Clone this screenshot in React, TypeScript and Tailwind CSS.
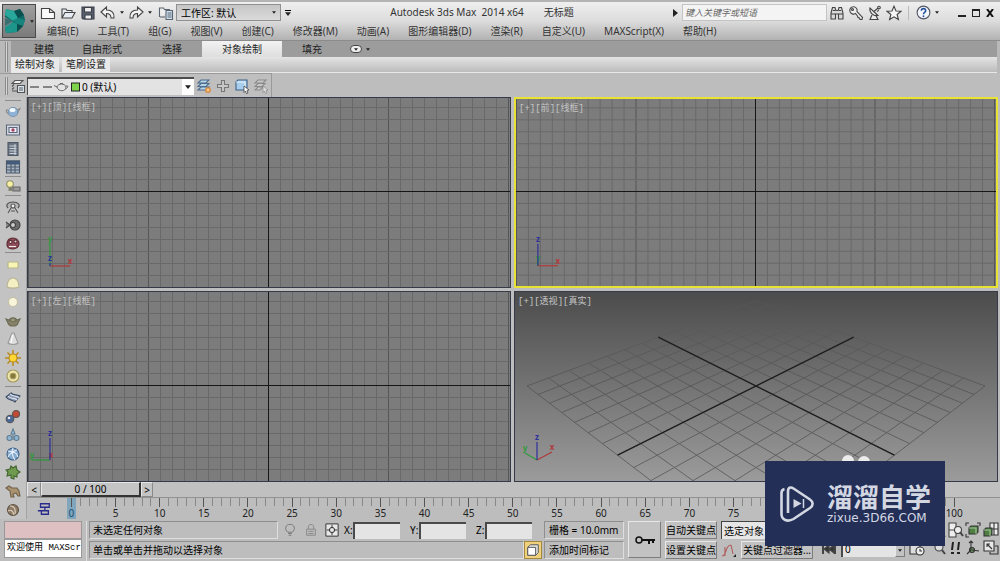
import { useState } from 'react';
import type { ReactNode } from 'react';

// ---------- Icons ----------

type IconProps = { children: ReactNode; size?: string; stroke?: string };

function Icon({ children, size = 'size-4', stroke = '#444' }: IconProps) {
  return (
    <svg viewBox="0 0 16 16" className={`${size} shrink-0`} fill="none" stroke={stroke} strokeWidth="1.1" aria-hidden="true">
      {children}
    </svg>
  );
}

function AppLogo() {
  return (
    <svg viewBox="0 0 24 26" className="h-[26px] w-6" aria-hidden="true">
      <path d="M2 1 10 3 16 1 20 7 21 12 19 18 13 24 2 25 1 20 9 14 1 9Z" fill="#0f6a66" />
      <path d="M2 1 10 3 14 10 9 13 1 7Z" fill="#2aa79b" />
      <path d="M10 3 16 1 20 7 14 10Z" fill="#0a4f50" />
      <path d="M1 10 9 13 1 18Z" fill="#3a6f70" />
      <path d="M9 13 14 10 21 12 19 18 13 16Z" fill="#17847d" />
      <path d="M9 14 13 16 13 24 2 25 1 19Z" fill="#1d958a" />
      <path d="M13 16 19 18 13 24Z" fill="#0a4f50" />
    </svg>
  );
}

const quickIcons = {
  new: <Icon><path d="M1.5 3.5h8l5 4v6h-13zM9.500 3.500v4h5" fill="#fafafa" /></Icon>,
  open: <Icon><path d="M2 13V4h4l1 1.500h5V8M2 13l3-5.500h10L12 13z" fill="#e8edf5" /></Icon>,
  save: (
    <Icon stroke="#3a3f48">
      <path d="M2 2h12v12H3l-1-1z" fill="#59616e" />
      <path d="M4.500 2.500h7V7h-7zM5 10h6.500v4H5z" fill="#eee" />
    </Icon>
  ),
  undo: <Icon><path d="M1 7l5.500-5v3C12 5 14.500 8 14 13h-3c0-3-1.500-4.500-4.500-4.500V12z" fill="#f4f4f4" /></Icon>,
  redo: <Icon><path d="M15 7L9.500 2v3C4 5 1.500 8 2 13h3c0-3 1.500-4.500 4.500-4.500V12z" fill="#f4f4f4" /></Icon>,
  workspace: (
    <Icon stroke="#5b6570">
      <path d="M1.500 12V3h4l1 1.500h5V6" fill="#eee" />
      <path d="M2 12h5" />
      <path d="M8 5.500h6.500v9H8z" fill="#cfe0f1" />
      <path d="M9.500 8h4M9.500 10h4M9.500 12h4" />
    </Icon>
  ),
};

const layerIcons = {
  manager: (
    <Icon stroke="#555">
      <path d="M5 2.500h8l-3 3H2zM2 8.500l2-2M2 11.500l2-2M2 13h5" fill="#f2f2f2" />
      <path d="M7.500 7.500h7v7h-7z" fill="#dce6f2" />
      <path d="M9 10h4M9 12h4" />
    </Icon>
  ),
  create: (
    <Icon stroke="#4c6d8b">
      <path d="M5 2h8l-3 3H2zM5 5.500h8l-3 3H2zM5 9h8l-3 3H2z" fill="#b6d3ea" />
      <circle cx="12" cy="12" r="2.300" stroke="#d9822b" fill="#f3c28a" />
    </Icon>
  ),
  add: <Icon stroke="#777"><path d="M6.500 2.500h3v4h4v3h-4v4h-3v-4h-4v-3h4z" fill="#c9c9c9" /></Icon>,
  select: (
    <Icon stroke="#3d6288">
      <path d="M2 4l2-2h9v8l-2 2H2z" fill="#a9cdec" />
      <path d="M2 4h9v8" stroke="#e9f3fb" />
      <path d="M10 8l5 4-2 .5 1 2.500-1.500.5-1-2.500-1.500 1.500z" fill="#fff" stroke="#333" strokeWidth=".7" />
    </Icon>
  ),
  current: (
    <Icon stroke="#8b8b8b">
      <path d="M5 2h8l-3 3H2zM5 5.500h7l-3 3H2zM5 9h5l-3 3H2z" fill="#c8c8c8" />
      <path d="M10 8l5 4-2 .5 1 2.500-1.500.5-1-2.500-1.500 1.500z" fill="#ddd" strokeWidth=".7" />
    </Icon>
  ),
};

const searchIcons = [
  {
    label: '搜索',
    icon: (
      <Icon>
        <path d="M2 8l1.500-5.500h2.500l.8 3h2.400l.8-3h2.500L14 8v6H9.500V9h-3v5H2z" fill="#d9d9d9" />
        <path d="M2 9h4.500M9.500 9H14M3.800 5.500h2.200M10 5.500h2.200" />
      </Icon>
    ),
  },
  {
    label: '许可证',
    icon: <Icon><path d="M7.500 8.500a3.700 3.700 0 1 1 1.500-2l5.500 6-.5 2-2 0-.5-1.500-1.500-.5-.5-1.500z" fill="#eee" /><circle cx="4.500" cy="4.500" r="1" /></Icon>,
  },
  {
    label: '通讯中心',
    icon: <Icon><path d="M3 3c-1 4 3 8.500 8 7.500zM7 6.500L11 3M5 10l-2 4.500h8L9 11" fill="#eee" /><circle cx="12" cy="2.500" r="1.300" /><path d="M10 6.500c1-.3 1.500-1 1.700-1.800" /></Icon>,
  },
  {
    label: '收藏夹',
    icon: <Icon><path d="M8 1.200l2 4.800 5 .3-3.900 3.200 1.300 5L8 11.800l-4.400 2.700 1.300-5L1 6.300 6 6z" fill="#f6f6f6" /></Icon>,
  },
];

// Left toolbar, split into groups by separators
const toolGroups: { label: string; icon: ReactNode }[][] = [
  [
    {
      label: '茶壶渲染',
      icon: (
        <Icon>
          <path d="M3 6c-2-1-3 2 1 4M12 6l3-1.500L12.500 9" stroke="#8a8a8a" />
          <ellipse cx="8" cy="8" rx="4.800" ry="4.500" fill="#8fb4d8" stroke="#7b93ab" />
          <ellipse cx="7.500" cy="6" rx="3" ry="2" fill="#f4f9fd" stroke="none" />
        </Icon>
      ),
    },
    {
      label: '渲染帧窗口',
      icon: <Icon stroke="#5d6678"><path d="M1.500 3h13v10h-13z" fill="#d4d9e3" /><path d="M4 5.500h8v5H4z" fill="#eef" /><circle cx="8" cy="8" r="1.700" fill="#a34a62" stroke="none" /></Icon>,
    },
    {
      label: '渲染设置',
      icon: <Icon stroke="#4f5a68"><path d="M3 1.500h10v13H3z" fill="#69727f" /><path d="M4.500 5h7M4.500 7.500h7M4.500 10h7M4.500 12.500h7M10 3v11" stroke="#c8d0da" /></Icon>,
    },
    {
      label: '材质表',
      icon: <Icon stroke="#4c5a6c"><path d="M1.500 2h13v12h-13z" fill="#a5b3c3" /><path d="M1.500 2h13v3h-13z" fill="#3f5d82" /><path d="M2 8h12M2 11h12M6 5v9M10 5v9" /></Icon>,
    },
  ],
  [
    {
      label: '灯光',
      icon: <Icon stroke="#8c8c70"><circle cx="5" cy="5" r="3.300" fill="#f7f0a0" /><path d="M4 8.500h3v3H4z" fill="#777" /><path d="M8 8h7v4H8z" fill="#999" stroke="#666" /></Icon>,
    },
  ],
  [
    {
      label: '阵列',
      icon: <Icon stroke="#555"><path d="M3 9c-3-3 0-6 5-6s8 3 5 6" fill="#b5b5b5" /><circle cx="8" cy="7" r="2" fill="#eee" /><path d="M6 9l-3 5M10 9l3 5M6 12h4" /></Icon>,
    },
    {
      label: '运动',
      icon: <Icon stroke="#444"><circle cx="10" cy="8" r="5" fill="#6c6c6c" /><circle cx="8" cy="8" r="2.500" fill="#ccc" /><path d="M1 5l4 3-4 3" fill="#888" /></Icon>,
    },
    {
      label: '群集',
      icon: <Icon stroke="#5c2c35"><path d="M2 10c0-5 2-7 6-7s6 3 6 6-3 5-6 5-6-1-6-4z" fill="#8e4b58" /><circle cx="5.500" cy="7" r="1.600" fill="#e6d9dc" /><circle cx="10.500" cy="6.500" r="1.600" fill="#e6d9dc" /><path d="M4 11.500h7" stroke="#eee" /></Icon>,
    },
  ],
  [
    { label: '平面', icon: <Icon stroke="#b9b48a"><path d="M3 5h10v6H3z" fill="#f8f4b4" /></Icon> },
    { label: '穹顶', icon: <Icon stroke="#b8b394"><path d="M2 12c0-6 3-9 6-9s6 3 6 9c-3 1.500-9 1.500-12 0z" fill="#f5efc4" /></Icon> },
    { label: '球体', icon: <Icon stroke="#c3bfa2"><circle cx="8" cy="8" r="4.500" fill="#f8f5da" /></Icon> },
    { label: '茶壶', icon: <Icon stroke="#6e6b55"><path d="M1 6l3 1c2-3 6-3 8 0l3-1-2 4c-1 4-9 4-10 0z" fill="#858169" /><ellipse cx="8" cy="7" rx="3" ry="1.300" fill="#b3af93" /></Icon> },
    { label: '圆锥体', icon: <Icon stroke="#999"><path d="M7 2h2l4 10c-2 2-8 2-10 0z" fill="#dedede" /><path d="M7.500 4l-1.500 8" stroke="#fff" /></Icon> },
    {
      label: '太阳',
      icon: <Icon stroke="#b98a1c"><path d="M8 0v16M0 8h16M2.500 2.500l11 11M13.500 2.500l-11 11" strokeWidth="1.500" /><circle cx="8" cy="8" r="4" fill="#ffd633" /></Icon>,
    },
    {
      label: '光度学',
      icon: <Icon stroke="#a59a5c"><circle cx="8" cy="8" r="6" fill="#efe6ad" /><circle cx="8" cy="8" r="2.800" fill="#85793c" /></Icon>,
    },
  ],
  [
    {
      label: '曲面',
      icon: <Icon stroke="#3b4a63"><path d="M1 7l5-4c3 3 5 1 9 3l-5 6c-3-3-6-1-9-5z" fill="#8a99b1" /><path d="M3 6c3 4 6 1 9 4M5 4c3 3 6 1 9 4" stroke="#dbe2ee" /></Icon>,
    },
    {
      label: '刚体',
      icon: <Icon stroke="#555"><circle cx="11" cy="5" r="3.500" fill="#c24a35" /><circle cx="5" cy="10" r="3.800" fill="#4b6796" /><circle cx="4" cy="9" r="1.300" fill="#dfe7f5" stroke="none" /></Icon>,
    },
    {
      label: '流体',
      icon: <Icon stroke="#5e7c93"><path d="M8 2l2 5H6z" fill="#a4c6dd" /><circle cx="4.500" cy="11" r="2.500" fill="#8fb5d0" /><circle cx="11.500" cy="11" r="2.500" fill="#8fb5d0" /><path d="M8 7v6" /></Icon>,
    },
    {
      label: '布料',
      icon: <Icon stroke="#3f6186"><circle cx="8" cy="8" r="6" fill="#86aacd" /><path d="M3 5c4 1 8 0 10 6M3 11c2-4 6-6 9-7M8 2c-2 5 0 9 2 12" stroke="#e5f0fa" /></Icon>,
    },
    {
      label: '植物',
      icon: <Icon stroke="#42642e"><path d="M6 14v-3L2 12l1-4-2-2 4-1 1-3 2 2 3-2 1 4 3 2-3 2 0 3-3-1v3z" fill="#6f9a4f" /></Icon>,
    },
    {
      label: '动物',
      icon: <Icon stroke="#71604a"><path d="M1 5l3-2 3 2h5l2 3 1 5h-2l-2-3-3 1 1 3H6L5 8z" fill="#a8926f" /></Icon>,
    },
    {
      label: '毛发',
      icon: <Icon stroke="#5e5142"><circle cx="8" cy="8" r="5.500" fill="#8c7b66" /><path d="M5 4c4 0 6 3 5 8M3 9c3-2 5 0 6 4" stroke="#ddd0bd" /></Icon>,
    },
  ],
];

// ---------- Header ----------

const menus = [
  '编辑(E)', '工具(T)', '组(G)', '视图(V)', '创建(C)', '修改器(M)', '动画(A)',
  '图形编辑器(D)', '渲染(R)', '自定义(U)', 'MAXScript(X)', '帮助(H)',
];

function Caret({ small = false }: { small?: boolean }) {
  return (
    <svg viewBox="0 0 8 5" className={small ? 'h-[3px] w-1 shrink-0' : 'h-1 w-1.5 shrink-0'} aria-hidden="true">
      <path d="M0 0h8L4 5z" fill="#222" />
    </svg>
  );
}

function Header() {
  return (
    <header className="flex h-10 border-t-2 border-[#b4b4b4] bg-linear-to-b from-[#efefef] via-[#dcdcdc] to-[#b2b2b2]">
      <button aria-label="应用程序" className="mt-0.5 ml-0.5 flex h-[34px] w-[34px] shrink-0 items-center justify-center gap-0.5 border border-[#4a4a4a] bg-linear-to-b from-[#a0a0a0] to-[#7a7a7a]">
        <AppLogo />
        <Caret small />
      </button>
      <div className="flex min-w-0 flex-1 flex-col">
        <div className="flex h-[21px] items-center">
          <div className="flex shrink-0 items-center pl-1">
            <button aria-label="新建" className="w-5">{quickIcons.new}</button>
            <button aria-label="打开" className="w-5">{quickIcons.open}</button>
            <button aria-label="保存" className="w-5">{quickIcons.save}</button>
            <button aria-label="撤消" className="flex w-7 items-center gap-1">{quickIcons.undo}<Caret small /></button>
            <button aria-label="重做" className="flex w-[30px] items-center gap-1">{quickIcons.redo}<Caret small /></button>
            <span className="w-[18px]">{quickIcons.workspace}</span>
            <label className="flex h-[17px] w-[105px] items-center border border-[#909090] bg-linear-to-b from-[#c6c6c6] to-[#dadada] pr-1">
              <select aria-label="工作区" className="min-w-0 flex-1 appearance-none pl-1 text-[10px] leading-4 text-black">
                <option>工作区: 默认</option>
              </select>
              <Caret small />
            </label>
            <button aria-label="自定义快速访问工具栏" className="flex flex-col items-center gap-px pl-1">
              <span className="h-px w-1.5 bg-black" />
              <Caret />
            </button>
          </div>
          <h1 className="flex min-w-0 flex-1 justify-center gap-5 text-[10px] whitespace-nowrap text-[#333]">
            <span>Autodesk 3ds Max&nbsp; 2014 x64</span>
            <span>无标题</span>
          </h1>
          <div className="flex shrink-0 items-center">
            <svg viewBox="0 0 5 8" className="mr-1 h-2 w-[5px]" aria-hidden="true"><path d="M0 0l5 4-5 4z" fill="#222" /></svg>
            <input
              type="text"
              aria-label="搜索"
              placeholder="键入关键字或短语"
              className="mr-0.5 h-[17px] w-[145px] border border-[#c4c4c4] bg-[#f4f4f4] px-0.5 text-[9px] italic placeholder:text-[#666]"
            />
            {searchIcons.map((s) => (
              <button key={s.label} aria-label={s.label} className="w-[19px]">{s.icon}</button>
            ))}
            <span className="mx-[3px] h-3.5 w-px bg-[#bbb]" />
            <button aria-label="帮助" className="flex w-7 items-center gap-1 pl-1">
              <svg viewBox="0 0 16 16" className="size-[15px] shrink-0" aria-hidden="true">
                <circle cx="8" cy="8" r="6.800" fill="#f3f6fb" stroke="#556" strokeWidth="1.200" />
                <path d="M5.700 6.200c.1-3.200 4.800-3 4.600-.1C10.200 8 8 7.900 8 9.800" fill="none" stroke="#27509b" strokeWidth="1.700" />
                <circle cx="8" cy="12" r="1" fill="#27509b" />
              </svg>
              <Caret small />
            </button>
            <div className="flex w-[60px] items-center justify-end gap-1.5 pr-1.5">
              <button aria-label="最小化" className="flex h-2 w-2 items-end"><span className="h-0.5 w-2 bg-[#222]" /></button>
              <button aria-label="最大化" className="h-2 w-2 border border-t-2 border-[#222]" />
              <button aria-label="关闭">
                <svg viewBox="0 0 8 8" className="size-2" aria-hidden="true"><path d="M1 0l6 8M7 0L1 8" stroke="#111" strokeWidth="2" /></svg>
              </button>
            </div>
          </div>
        </div>
        <nav className="flex h-[17px] items-center gap-[19px] pl-[11px] text-[10px] whitespace-nowrap text-[#333]">
          {menus.map((m) => (
            <button key={m}>{m}</button>
          ))}
        </nav>
      </div>
    </header>
  );
}

// ---------- Ribbon ----------

function Grip() {
  return <span className="ml-[5px] h-full w-[3px] shrink-0 border-x border-[#8b8b8b] bg-[#d5d5d5]" />;
}

function Ribbon() {
  const [active, setActive] = useState('对象绘制');
  const tabs = ['自由形式', '选择', '对象绘制', '填充'];

  return (
    <section className="flex h-[33px] border-t border-[#8c8c8c] bg-[#b9b9b9] pr-[3px]">
      <div className="flex w-[11px] shrink-0 py-px"><Grip /></div>
      <div className="flex min-w-0 flex-1 flex-col">
        <div className="flex h-4 items-stretch bg-[#9c9c9c] pl-[15px] text-[10px] text-[#222]">
          <button className="px-2 leading-4" onClick={() => setActive('建模')}>建模</button>
          {tabs.map((t) => (
            <button
              key={t}
              onClick={() => setActive(t)}
              className={`px-5 leading-4 ${t === active ? 'bg-linear-to-b from-[#f2f2f2] to-[#dedede]' : ''}`}
            >
              {t}
            </button>
          ))}
          <button aria-label="最小化功能区" className="ml-2 flex items-center gap-1">
            <span className="flex h-2 w-3 items-center justify-center rounded-sm border border-[#444] bg-[#eee]"><Caret small /></span>
            <Caret small />
          </button>
        </div>
        <div className="flex h-4 gap-[3px] border-b border-[#e8e8e8] bg-linear-to-b from-[#e4e4e4] to-[#bcbcbc] text-[10px] text-[#222]">
          <button className="bg-[#e9e9e9] px-1 leading-[15px]">绘制对象</button>
          <button className="bg-[#e9e9e9] px-1 leading-[15px]">笔刷设置</button>
        </div>
      </div>
    </section>
  );
}

function LayerBar() {
  return (
    <section className="flex h-6 w-[272px] items-center border-t border-r border-[#9a9a9a] bg-[#bfbfbf]">
      <div className="flex h-[18px] w-2.5 shrink-0"><Grip /></div>
      <button aria-label="层管理器" className="w-[17px]">{layerIcons.manager}</button>
      <label className="flex h-[18px] w-[167px] items-center border-t-2 border-l border-[#4d4d4d] bg-[#e3e3e3] pl-0.5">
        <svg viewBox="0 0 52 14" className="h-3.5 w-[52px] shrink-0" fill="none" stroke="#666" aria-hidden="true">
          <path d="M0 7h9M13 7h9" strokeWidth="1.500" />
          <path d="M27 7c1-4 8-4 9 0 0 5-8 5-9 0zM27 7l-3-1.500M36 6c3-1 2 2-.5 3M30 3.500h3" />
          <rect x="41.500" y="3" width="8" height="8" fill="#7fd24c" stroke="#222" />
        </svg>
        <select aria-label="层" className="min-w-0 flex-1 appearance-none text-[10px] leading-4 text-black">
          <option>0 (默认)</option>
        </select>
        <span className="flex h-full w-3 items-center justify-center bg-white"><Caret /></span>
      </label>
      <div className="flex items-center gap-[3px] pl-0.5">
        <button aria-label="新建层">{layerIcons.create}</button>
        <button aria-label="添加到层">{layerIcons.add}</button>
        <button aria-label="选择层中对象">{layerIcons.select}</button>
        <button aria-label="设为当前层">{layerIcons.current}</button>
      </div>
    </section>
  );
}

function ToolColumn() {
  return (
    <aside className="flex w-[27px] shrink-0 flex-col border-r border-[#a2a2a2] bg-[#c3c3c3] pt-[3px]">
      {toolGroups.map((group, i) => (
        <div key={i} className="flex flex-col items-center" style={{ flex: group.length }}>
          <span className="mb-0.5 h-px w-4 shrink-0 bg-[#8d8d8d]" />
          {group.map((tool) => (
            <button key={tool.label} aria-label={tool.label} className="flex min-h-0 flex-1 items-center">
              {tool.icon}
            </button>
          ))}
        </div>
      ))}
    </aside>
  );
}

// ---------- Viewports ----------

const W = 482;
const H = 189;
const CX = 241;
const CY = 94;
const STEP = 12;

type Axis = { name: string; color: string; dx: number; dy: number };

const X: Axis = { name: 'x', color: '#b03a3a', dx: 20, dy: 0 };
const Y: Axis = { name: 'y', color: '#2f9a3c', dx: 0, dy: -22 };
const Z: Axis = { name: 'z', color: '#2c2f9c', dx: 0, dy: -22 };

function Tripod({ axes }: { axes: Axis[] }) {
  return (
    <g transform="translate(22 168)">
      {axes.map((a) => (
        <g key={a.name}>
          <line x1="0" y1="0" x2={a.dx} y2={a.dy} stroke={a.color} strokeWidth="1.200" />
          <text x={a.dx} y={a.dy - 2} fill={a.color} fontSize="8" fontWeight="bold" textAnchor="middle">{a.name}</text>
        </g>
      ))}
    </g>
  );
}

function OrthoGrid({ axes }: { axes: Axis[] }) {
  const cols = Array.from({ length: 41 }, (_, i) => i - 20);
  const rows = Array.from({ length: 17 }, (_, i) => i - 8);
  const tone = (i: number) => (i === 0 ? '#161616' : i % 10 === 0 ? '#555' : '#696969');
  return (
    <svg viewBox={`0 0 ${W} ${H}`} preserveAspectRatio="xMidYMid slice" className="h-full w-full bg-[#7c7c7c]" aria-hidden="true">
      {cols.map((i) => (
        <path key={`c${i}`} d={`M${CX + i * STEP - 0.5} 0V${H}`} stroke={tone(i)} />
      ))}
      {rows.map((i) => (
        <path key={`r${i}`} d={`M0 ${CY + i * STEP - 0.5}H${W}`} stroke={tone(i)} />
      ))}
      <path d={`M${CX - 0.5} 0V${H}`} stroke="#161616" />
      <Tripod axes={axes} />
    </svg>
  );
}

// Projects a ground point (a, b in -1..1) to the perspective view
function project(a: number, b: number) {
  const side = (a - b) / 2;
  const depth = 1 + (0.345 * (a + b)) / 2;
  return `${(CX + (229 * side) / depth).toFixed(1)} ${(CY + 332 * (1 / depth - 1)).toFixed(1)}`;
}

function PerspectiveGrid() {
  const lines = Array.from({ length: 15 }, (_, i) => (i - 7) / 7);
  return (
    <svg viewBox={`0 0 ${W} ${H}`} preserveAspectRatio="xMidYMid slice" className="h-full w-full" aria-hidden="true">
      <defs>
        <linearGradient id="sky" x1="0" y1="0" x2="0" y2="1">
          <stop offset="0" stopColor="#4c4c4c" />
          <stop offset="1" stopColor="#9b9b9b" />
        </linearGradient>
        <linearGradient id="fog" gradientUnits="userSpaceOnUse" x1="0" y1="0" x2="0" y2={H}>
          <stop offset="0" stopColor="#525252" />
          <stop offset=".2" stopColor="#5a5a5a" />
          <stop offset=".5" stopColor="#5a5a5a" />
          <stop offset="1" stopColor="#646464" />
        </linearGradient>
      </defs>
      <rect width={W} height={H} fill="url(#sky)" />
      {lines.map((t) => (
        <path key={t} d={`M${project(t, -1)}L${project(t, 1)}M${project(-1, t)}L${project(1, t)}`} stroke="url(#fog)" />
      ))}
      <path d={`M${project(0, -1)}L${project(0, 1)}M${project(-1, 0)}L${project(1, 0)}`} stroke="#1e1e1e" strokeWidth="1.300" />
      <Tripod axes={[{ ...X, dx: 15, dy: -8 }, { ...Y, dx: -12, dy: -7 }, { ...Z, dy: -18 }]} />
    </svg>
  );
}

function Viewport({ name, mode, active = false, children }: { name: string; mode: string; active?: boolean; children: ReactNode }) {
  return (
    <section className={`relative min-h-0 min-w-0 overflow-hidden ${active ? 'border-2 border-[#e8e234]' : 'border border-[#363a48]'}`}>
      <div className="absolute inset-0">{children}</div>
      <p className="relative px-[3px] pt-1 font-['Liberation_Mono','Noto_Sans_CJK_SC',monospace] text-[9px] leading-3 text-[#c4c4c4]">
        [+][{name}][{mode}]
      </p>
    </section>
  );
}

function Viewports() {
  return (
    <main className="grid min-h-[385px] flex-1 grid-cols-2 grid-rows-2 gap-[3px] pr-0.5">
      <Viewport name="顶" mode="线框"><OrthoGrid axes={[X, Y, { ...Z, dy: -3 }]} /></Viewport>
      <Viewport name="前" mode="线框" active><OrthoGrid axes={[X, { ...Y, dy: -3 }, Z]} /></Viewport>
      <Viewport name="左" mode="线框"><OrthoGrid axes={[{ ...X, dx: 1 }, { ...Y, dx: -18, dy: 0 }, Z]} /></Viewport>
      <Viewport name="透视" mode="真实"><PerspectiveGrid /></Viewport>
    </main>
  );
}

// ---------- Timeline ----------

function TimeSlider() {
  const raised = 'border border-[#8a8a8a] border-t-[#e6e6e6] border-l-[#e6e6e6] bg-[#c4c4c4]';
  return (
    <div className="flex h-[15px] text-[10px] leading-3 text-black">
      <button aria-label="上一帧" className={`w-3.5 ${raised}`}>&lt;</button>
      <button className="w-[100px] border border-t-[#e6e6e6] border-r-2 border-b-2 border-l-[#e6e6e6] border-[#333] bg-[#c4c4c4] leading-3">0 / 100</button>
      <button aria-label="下一帧" className={`w-3 ${raised}`}>&gt;</button>
      <div className="flex-1 bg-[#c0c0c0]" />
    </div>
  );
}

function TrackBar() {
  const frames = Array.from({ length: 101 }, (_, i) => i);
  const hasLabel = (f: number) => f % 5 === 0 && (f < 80 || f === 100);
  return (
    <div className="flex h-[22px] border-t border-[#929292] pr-[42px]">
      <button aria-label="打开迷你曲线编辑器" className="flex w-10 shrink-0 items-center justify-center pr-1.5">
        <Icon size="size-3.5" stroke="#2b2b8c">
          <path d="M4 2h10v4H4zM9 6v4H1M5 10h8v4H5z" strokeWidth="1.500" />
        </Icon>
      </button>
      {frames.map((f) => (
        <div key={f} className={`flex w-0 flex-1 flex-col items-center text-[10px] leading-3 whitespace-nowrap ${f === 0 ? 'bg-[#7fa6bd] text-[#1d4f74]' : 'text-[#222]'}`}>
          <span className={`w-px shrink-0 ${f % 5 === 0 ? 'h-[9px] bg-[#555]' : 'h-2 bg-[#888]'}`} />
          {hasLabel(f) && <span>{f}</span>}
        </div>
      ))}
    </div>
  );
}

// ---------- Status bar ----------

const sunken = 'border border-[#8e8e8e] border-r-[#dedede] border-b-[#dedede]';
const raisedBtn = 'border border-[#7d7d7d] border-t-[#e8e8e8] border-l-[#e8e8e8] bg-[#c2c2c2]';

function Coord({ label }: { label: string }) {
  return (
    <label className="flex items-center">
      <span className="w-[9px]">{label}:</span>
      <input type="text" className="h-[17px] w-[47px] border-t-2 border-l-2 border-[#4a4a4a] bg-[#e4e4e4]" />
    </label>
  );
}

function StatusBar() {
  return (
    <footer className="flex h-[42px] gap-1 bg-[#bdbdbd] pt-0.5 pl-1 text-[10px] text-black">
      <div className="flex w-[78px] shrink-0 flex-col">
        <div className="h-[18px] border border-[#999] bg-[#dfc0c2]" />
        <div className="h-[19px] border border-[#999] bg-white px-0.5 font-['Liberation_Mono','Noto_Sans_CJK_SC',monospace] text-[9px] leading-[17px] whitespace-nowrap">
          欢迎使用 MAXScr
        </div>
      </div>

      <div className="flex min-w-0 flex-1 flex-col gap-0.5 border-l border-[#ddd] pl-0.5">
        <div className="flex h-[18px] items-center">
          <div className={`h-full min-w-0 flex-1 px-[3px] leading-4 ${sunken}`}>未选定任何对象</div>
          <div className="flex items-center gap-[7px] px-[5px]">
            <Icon size="size-3.5" stroke="#777"><path d="M5.500 10.500C1 7 3 1.500 8 1.500s7 5.500 2.500 9zM6 12h4M6.500 14h3" /></Icon>
            <Icon size="size-3.5" stroke="#888"><path d="M3 7h10v7H3zM5 7V4c0-3 6-3 6 0v3M5 9.500h6M5 12h6" /></Icon>
            <Icon size="size-3.5" stroke="#333"><path d="M1 1h14v14H1z" fill="#e8e8e8" /><circle cx="8" cy="8" r="3" /><path d="M8 2v4M8 10v4M2 8h4M10 8h4" /></Icon>
          </div>
          <div className="flex gap-2.5 pr-3">
            <Coord label="X" />
            <Coord label="Y" />
            <Coord label="Z" />
          </div>
          <div className={`h-full w-20 px-1 leading-4 ${sunken}`}>栅格 = 10.0mm</div>
        </div>
        <div className="flex h-[18px] items-center">
          <div className={`h-full min-w-0 flex-1 px-[3px] leading-4 ${sunken}`}>单击或单击并拖动以选择对象</div>
          <button aria-label="自适应降级" className="mr-0.5 flex h-full w-[18px] items-center justify-center border border-[#a58a3d] bg-[#efd07c]">
            <Icon size="size-3.5" stroke="#555"><path d="M2 5l3-3h9v9l-3 3H2z" fill="#e3e3e3" /><path d="M2 5h9v9H2z" fill="#fff" /></Icon>
          </button>
          <button className={`h-full w-20 px-1 text-left leading-4 ${sunken}`}>添加时间标记</button>
        </div>
      </div>

      <button aria-label="设置关键点" className={`flex h-[37px] w-[33px] shrink-0 items-center justify-center ${raisedBtn}`}>
        <svg viewBox="0 0 20 10" className="h-2.5 w-5" fill="none" stroke="#111" strokeWidth="2" aria-hidden="true">
          <circle cx="4" cy="5" r="3" strokeWidth="1.500" />
          <path d="M7 5h13M14 5v4M18 5v3" />
        </svg>
      </button>

      <div className="flex w-[52px] shrink-0 flex-col gap-0.5">
        <button className={`h-[18px] leading-4 whitespace-nowrap ${raisedBtn}`}>自动关键点</button>
        <button className={`h-[18px] leading-4 whitespace-nowrap ${raisedBtn}`}>设置关键点</button>
      </div>

      <div className="flex w-[92px] shrink-0 flex-col gap-0.5">
        <select aria-label="选择集" className="h-[18px] appearance-none border-t border-l border-[#444] bg-[#e6e6e6] px-0.5 leading-4">
          <option>选定对象</option>
        </select>
        <div className="flex items-center gap-1">
          <button aria-label="新建关键点切线">
            <Icon stroke="#b05a5a"><path d="M1 14c5 0 3-11 9-11M10 3l2 9M4 5v9" /><path d="M15 15v-3l-3 3z" fill="#222" stroke="none" /></Icon>
          </button>
          <button className={`h-[18px] flex-1 leading-4 whitespace-nowrap ${raisedBtn}`}>关键点过滤器...</button>
        </div>
      </div>

      <div className="flex w-[108px] shrink-0 items-end gap-1 pb-1 pl-1">
        <button aria-label="上一关键点">
          <Icon><path d="M2 3v10M14 3v10" strokeWidth="2" /><path d="M8 4v8L3 8zM13 4v8L8 8z" fill="#333" /></Icon>
        </button>
        <div className="flex h-[18px] items-stretch">
          <input type="text" aria-label="当前帧" defaultValue="0" className="w-[54px] border-t-2 border-l-2 border-[#4a4a4a] bg-[#e4e4e4] px-0.5" />
          <button aria-label="减少帧" className={`flex w-2.5 items-end justify-center pb-1 ${raisedBtn}`}><Caret small /></button>
        </div>
        <button aria-label="时间配置">
          <Icon stroke="#333"><path d="M1 3h10v10H1z" fill="#ddd" /><circle cx="11" cy="10" r="4" fill="#eee" /><path d="M11 8v2h2" /></Icon>
        </button>
      </div>

      {/* Viewport navigation */}
      <div className="grid w-[71px] shrink-0 grid-cols-4 grid-rows-2 place-items-center pb-1">
        <Icon stroke="#444"><circle cx="7" cy="7" r="4" fill="#ddd" /><path d="M10 10l5 5" strokeWidth="2" /></Icon>
        <Icon stroke="#444"><path d="M1 1h7v14H1zM1 8h7" fill="#eee" /><circle cx="10" cy="8" r="3.500" fill="#eee" /><path d="M12 10l3 4" strokeWidth="2" /></Icon>
        <Icon stroke="#333">
          <path d="M1 4V1h3M12 1h3v3M1 12v3h3" />
          <path d="M4 6l2-2h7v6l-2 2H4z" fill="#4f7f42" />
          <path d="M4 6h7v6" stroke="#a4c79a" />
        </Icon>
        <Icon stroke="#333">
          <path d="M7 1h8v12H7zM7 7h8M11 1v12" fill="#eee" />
          <path d="M1 8l2-2h6v6l-2 2H1z" fill="#4f7f42" />
          <path d="M1 8h6v6" stroke="#a4c79a" />
        </Icon>
        <Icon stroke="#444"><path d="M1 5h5v5" strokeDasharray="1.500 1.500" /><circle cx="9" cy="7" r="4" fill="#ddd" /><path d="M12 10l3 4" strokeWidth="2" /></Icon>
        <Icon stroke="#222"><path d="M5 2l-1 8M11 2l-1 8" strokeWidth="2" /><path d="M3 13h3M9 13h3" strokeWidth="2" /></Icon>
        <Icon stroke="#333"><circle cx="7" cy="10" r="2.500" fill="#6b8f5e" /><path d="M6 1v9l-4 4M7 10l7 1M4 3l2-2 2 2" /></Icon>
        <Icon stroke="#333"><path d="M1 1h10v10H1z" fill="#e8e8e8" /><path d="M12 6h3v8H7v-2M4 4l5 5M4 7V4h3" /></Icon>
      </div>
    </footer>
  );
}

function Watermark() {
  return (
    <div className="absolute right-[55px] bottom-[15px]">
      <svg viewBox="0 0 30 14" className="absolute -top-[7px] left-[76px] h-3.5 w-[30px]" aria-hidden="true">
        <circle cx="7" cy="7" r="6" fill="#ececec" />
        <circle cx="23" cy="8" r="6" fill="#ececec" />
      </svg>
      <div className="relative flex h-[85px] w-[180px] items-center gap-3 bg-[#232f57] pl-[14px] text-[#d3d7e2]">
        <svg viewBox="0 0 36 38" className="h-[38px] w-9 shrink-0" fill="none" stroke="currentColor" aria-hidden="true">
          <path d="M9 28V6.500c0-4 2.500-5 5.500-3L31 14.500c3.500 2.500 3.500 6 0 8.500L14.500 34c-6 3.500-12 1-12-5V8c0-2 1-3.500 3-4" strokeWidth="2.600" />
          <path d="M14.500 14l8 4.500-8 4.500z" fill="currentColor" stroke="none" />
          <path d="M24.500 14v9" strokeWidth="1.500" />
        </svg>
        <div>
          <p className="text-[26px] leading-7 font-bold">溜溜自学</p>
          <p className="font-['DejaVu_Sans',sans-serif] text-[12px] leading-[14px]">zixue.3D66.COM</p>
        </div>
      </div>
    </div>
  );
}

export default function App() {
  return (
    <div className="relative flex min-h-screen flex-col overflow-hidden bg-[#bdbdbd] font-['Noto_Sans','Noto_Sans_CJK_SC',sans-serif]">
      <Header />
      <Ribbon />
      <LayerBar />
      <div className="flex flex-1">
        <ToolColumn />
        <div className="flex min-w-0 flex-1 flex-col">
          <Viewports />
          <TimeSlider />
          <TrackBar />
        </div>
      </div>
      <StatusBar />
      <Watermark />
    </div>
  );
}
